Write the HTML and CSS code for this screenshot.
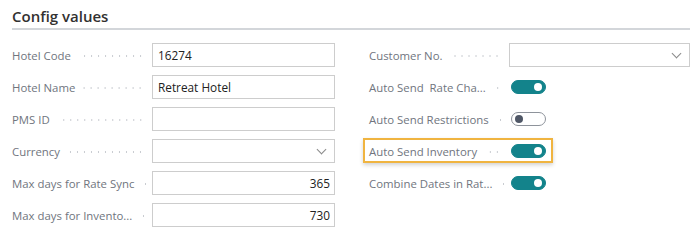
FILE: index.html
```html
<!DOCTYPE html>
<html>
<head lang="en">
    <meta charset="UTF-8">
    <title>Config values</title>
    <link rel="stylesheet" href="styles.css">
</head>
<body>
    <div class="page">
        <h2 class="title">Config values</h2>
        <div class="cols">
            <div class="col">
                <div class="field">
                    <div class="key"><span class="lbl">Hotel Code</span><i class="dots"></i></div>
                    <div class="box">16274</div>
                </div>
                <div class="field">
                    <div class="key"><span class="lbl">Hotel Name</span><i class="dots"></i></div>
                    <div class="box">Retreat Hotel</div>
                </div>
                <div class="field">
                    <div class="key"><span class="lbl">PMS ID</span><i class="dots"></i></div>
                    <div class="box"></div>
                </div>
                <div class="field">
                    <div class="key"><span class="lbl">Currency</span><i class="dots"></i></div>
                    <div class="box select"><span class="chev"></span></div>
                </div>
                <div class="field">
                    <div class="key"><span class="lbl">Max days for Rate Sync</span><i class="dots"></i></div>
                    <div class="box num">365</div>
                </div>
                <div class="field">
                    <div class="key"><span class="lbl">Max days for Invento...</span><i class="dots"></i></div>
                    <div class="box num">730</div>
                </div>
            </div>
            <div class="col">
                <div class="field">
                    <div class="key"><span class="lbl">Customer No.</span><i class="dots"></i></div>
                    <div class="box select"><span class="chev"></span></div>
                </div>
                <div class="field">
                    <div class="key"><span class="lbl">Auto Send&nbsp; Rate Cha...</span><i class="dots"></i></div>
                    <div class="ctl"><span class="tgl on"></span></div>
                </div>
                <div class="field">
                    <div class="key"><span class="lbl">Auto Send Restrictions</span><i class="dots"></i></div>
                    <div class="ctl"><span class="tgl"></span></div>
                </div>
                <div class="field focus">
                    <div class="key"><span class="lbl">Auto Send Inventory</span><i class="dots"></i></div>
                    <div class="ctl"><span class="tgl on"></span></div>
                </div>
                <div class="field">
                    <div class="key"><span class="lbl">Combine Dates in Rat...</span><i class="dots"></i></div>
                    <div class="ctl"><span class="tgl on"></span></div>
                </div>
            </div>
        </div>
    </div>
</body>
</html>
```

FILE: styles.css
```css
body, h2 { margin: 0; padding: 0; }
body {
    background: #fff;
    font-family: "Open Sans", "Liberation Sans", sans-serif;
    font-size: 11.4px;
    color: #262626;
}
.page {
    padding: 6px 10px 0 12px;
}
.title {
    font-size: 15px;
    font-weight: 600;
    color: #323130;
    line-height: 20px;
    padding-bottom: 2px;
    border-bottom: 2px solid #d3d6da;
}
.cols {
    display: grid;
    grid-template-columns: 323px 321px;
    column-gap: 34px;
    padding-top: 13px;
}
.col {
    display: flex;
    flex-direction: column;
    gap: 8px;
}
.field {
    position: relative;
    display: flex;
    align-items: center;
    height: 24px;
}
.key {
    width: 140px;
    flex: none;
    display: flex;
    align-items: center;
}
.lbl {
    color: #70757e;
    white-space: nowrap;
}
.dots {
    flex: 1;
    min-width: 7px;
    height: 2px;
    margin: 2px 8px 0 8px;
    background: radial-gradient(circle, #c9ccd1 0.8px, transparent 1px) right center / 7px 2px repeat-x;
}
.box {
    position: relative;
    box-sizing: border-box;
    width: 183px;
    height: 24px;
    line-height: 22px;
    padding: 0 5px;
    border: 1px solid #cdcdcd;
    color: #212121;
    font-size: 11.8px;
}
.col:last-child .box {
    width: 181px;
}
.num {
    text-align: right;
    padding-right: 4px;
}
.chev {
    position: absolute;
    right: 9px;
    top: 6px;
    width: 6px;
    height: 6px;
    border-right: 1px solid #8a8a8a;
    border-bottom: 1px solid #8a8a8a;
    transform: rotate(45deg);
}
.ctl {
    width: 181px;
    display: flex;
    align-items: center;
    padding-left: 2px;
}
.tgl {
    position: relative;
    box-sizing: border-box;
    width: 35px;
    height: 14px;
    border-radius: 7px;
    border: 1px solid #8e939b;
    background: #fff;
}
.tgl:after {
    content: '';
    position: absolute;
    left: 3px;
    top: 2px;
    width: 8px;
    height: 8px;
    border-radius: 50%;
    background: #4f5766;
}
.tgl.on {
    border-color: #13838b;
    background: #13838b;
}
.tgl.on:after {
    left: auto;
    right: 3px;
    background: #fff;
}
.focus:before {
    content: '';
    position: absolute;
    left: -6px;
    top: -1px;
    width: 190px;
    height: 25px;
    box-sizing: border-box;
    border: 2px solid #f0b440;
    box-shadow: 0 2px 4px rgba(0, 0, 0, 0.18);
}
```
